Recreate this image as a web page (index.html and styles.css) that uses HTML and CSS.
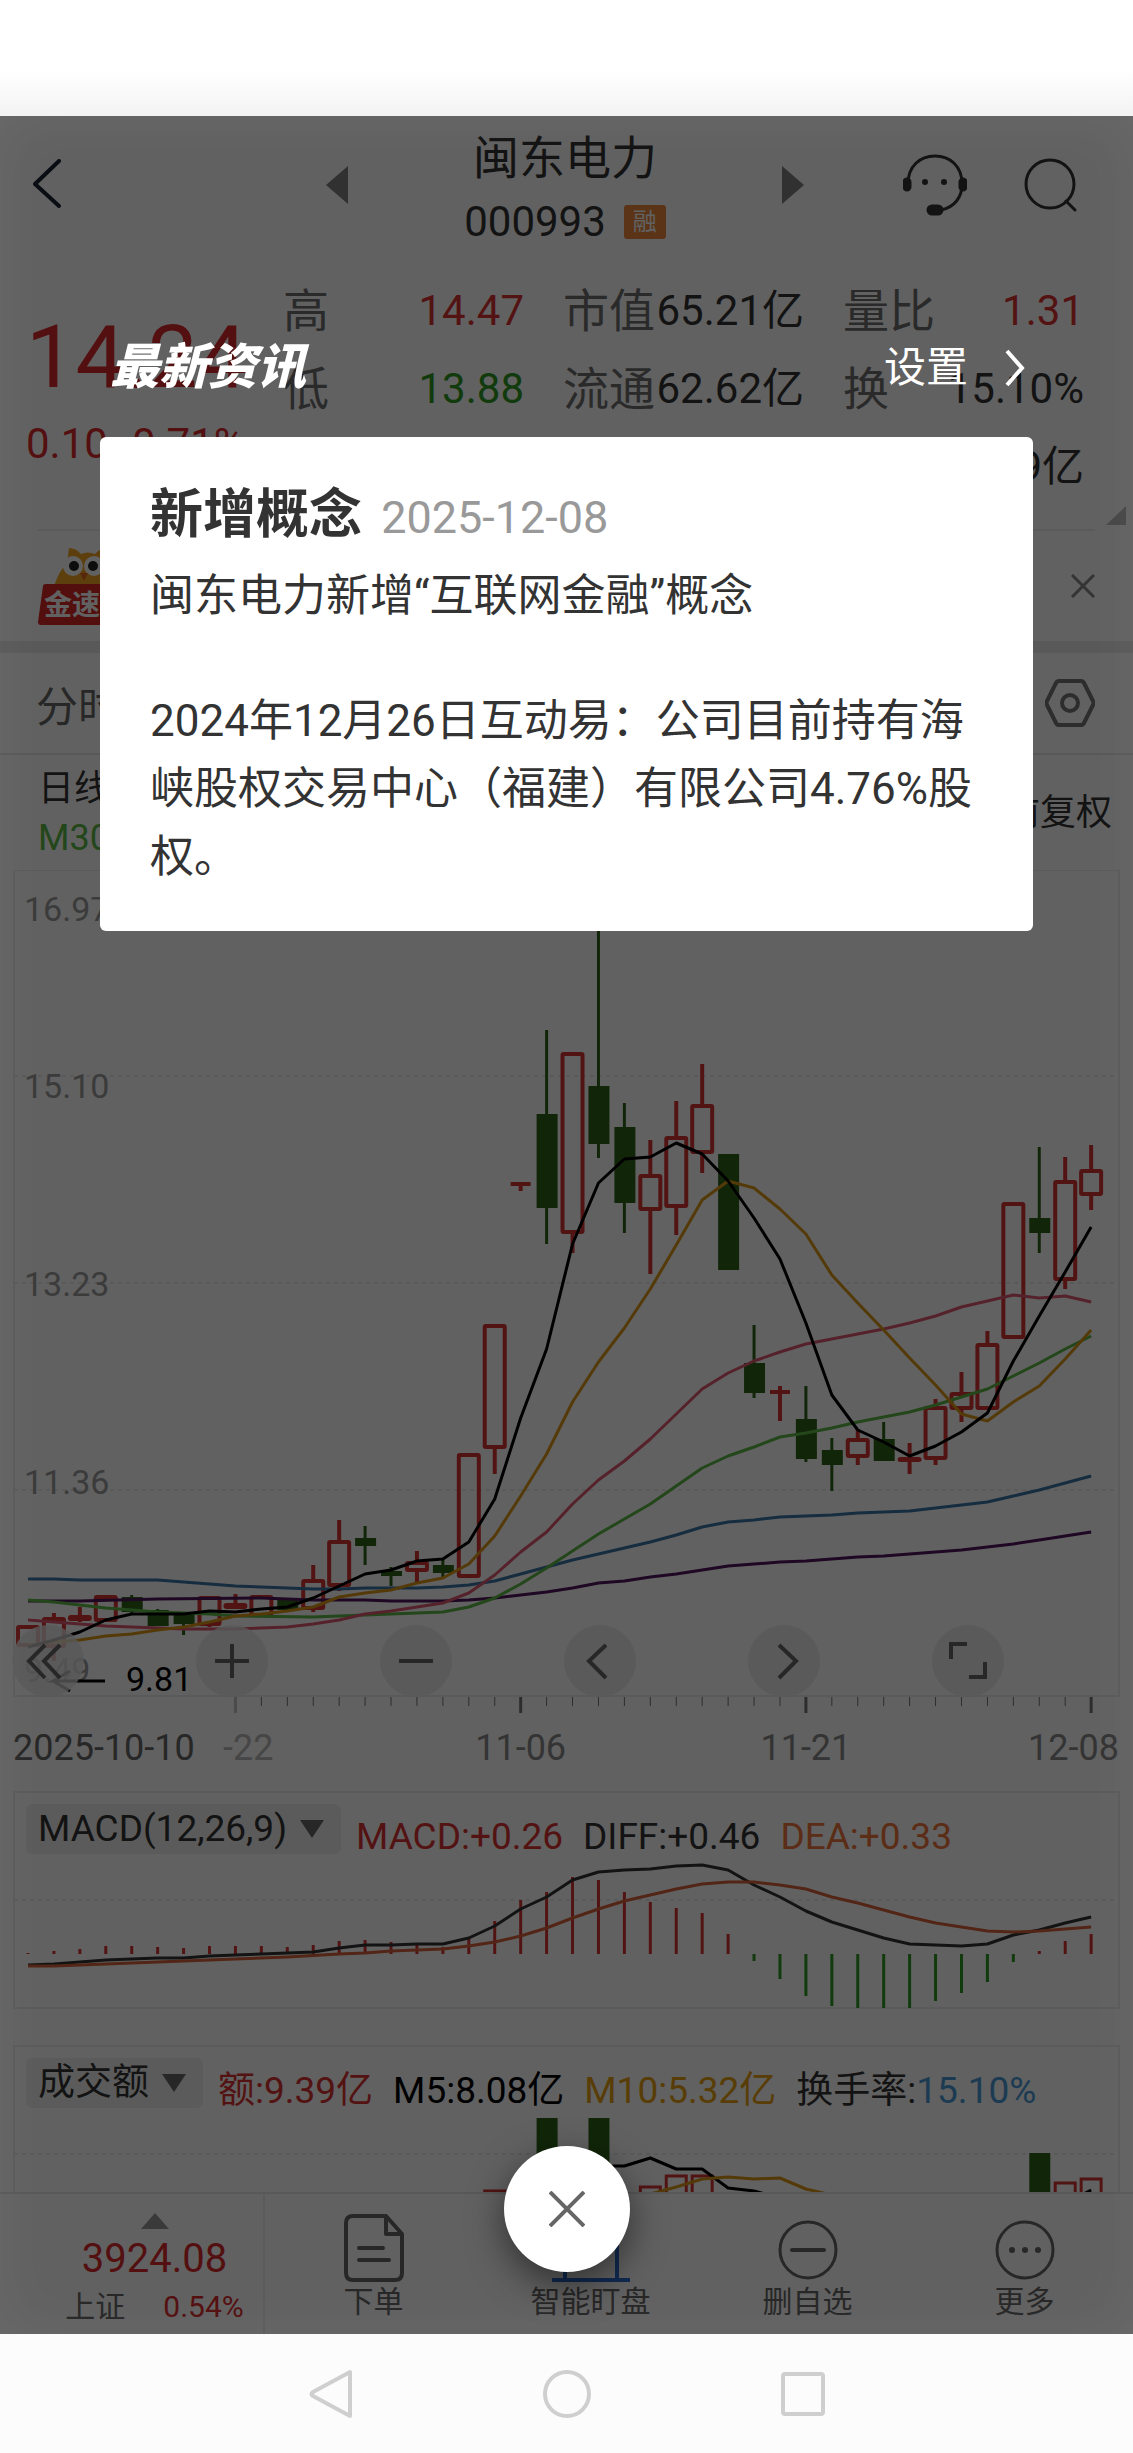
FILE: index.html
```html
<!DOCTYPE html>
<html lang="zh-CN">
<head>
    <meta charset="UTF-8">
    <meta name="viewport" content="width=device-width, initial-scale=1">
    <title>闽东电力 000993</title>
    <link rel="stylesheet" href="styles.css">
</head>

<body>
    <div class="status-bar"></div>

    <div class="app">
        <header class="header">
            <button class="icon-btn" aria-label="返回">
                <svg width="30" height="52" viewBox="0 0 30 52"><path d="M26 2 L2 25 L26 47" fill="none" stroke="#1c2433" stroke-width="4" stroke-linecap="round" stroke-linejoin="round"/></svg>
            </button>
            <div class="stock-nav">
                <button class="icon-btn" aria-label="上一只">
                    <svg width="22" height="38" viewBox="0 0 22 38"><path d="M22 0 V38 L0 19 Z" fill="#808080"/></svg>
                </button>
                <div class="stock-title">
                    <h1>闽东电力</h1>
                    <p>000993 <span class="tag">融</span></p>
                </div>
                <button class="icon-btn" aria-label="下一只">
                    <svg width="22" height="38" viewBox="0 0 22 38"><path d="M0 0 V38 L22 19 Z" fill="#808080"/></svg>
                </button>
            </div>
            <div class="header-tools">
                <button class="icon-btn" aria-label="客服">
                    <svg width="64" height="62" viewBox="0 0 64 62" fill="none" stroke="#333" stroke-width="3">
                        <path d="M5 30 C5 12 17 2 32 2 C47 2 59 12 59 30 C59 43 52 53 38 56"/>
                        <rect x="1" y="25" width="6" height="11" rx="3" fill="#333"/>
                        <rect x="57" y="25" width="6" height="11" rx="3" fill="#333"/>
                        <rect x="25" y="52" width="14" height="8" rx="4" fill="#333"/>
                        <circle cx="22" cy="28" r="3" fill="#333" stroke="none"/>
                        <circle cx="41" cy="28" r="3" fill="#333" stroke="none"/>
                    </svg>
                </button>
                <button class="icon-btn" aria-label="搜索">
                    <svg width="54" height="54" viewBox="0 0 54 54" fill="none" stroke="#333" stroke-width="3" stroke-linecap="round"><circle cx="27" cy="26" r="24"/><path d="M43 43 L52 52"/></svg>
                </button>
            </div>
        </header>

        <section class="quote">
            <div class="price">
                <strong>14.24</strong>
                <span>0.10</span><span>0.71%</span>
            </div>
            <dl>
                <div><dt>高</dt><dd class="red">14.47</dd></div>
                <div><dt>低</dt><dd class="green">13.88</dd></div>
            </dl>
            <dl>
                <div><dt>市值</dt><dd>65.21亿</dd></div>
                <div><dt>流通</dt><dd>62.62亿</dd></div>
            </dl>
            <dl>
                <div><dt>量比</dt><dd class="red">1.31</dd></div>
                <div><dt>换</dt><dd>15.10%</dd></div>
                <div><dt>额</dt><dd>9.39亿</dd></div>
            </dl>
        </section>
        <div class="more-corner">
            <svg width="20" height="19" viewBox="0 0 20 19"><path d="M20 0 V19 H0 Z" fill="#bbb"/></svg>
        </div>

        <section class="banner">
            <a class="banner-link" href="#">
                <svg width="104" height="80" viewBox="0 0 104 80">
                    <path d="M14 50 C16 36 22 24 29 17 L31 2 Q38 2 43 8 Q50 5 57 8 Q62 2 69 2 L71 17 C80 24 86 36 87 50 Z" fill="#f5a623"/>
                    <path d="M28 50 Q47 26 66 50 Z" fill="#fff"/>
                    <circle cx="35" cy="20" r="10" fill="#fff"/>
                    <circle cx="56" cy="20" r="10" fill="#fff"/>
                    <circle cx="36" cy="20" r="5" fill="#222"/>
                    <circle cx="55" cy="20" r="5" fill="#222"/>
                    <path d="M42 27 L50 27 L46 35 Z" fill="#e8641b"/>
                    <path d="M8 38 H104 V79 H3 Q0 79 0 76 L5 40 Q5 38 8 38 Z" fill="#d92626"/>
                    <text x="6" y="69" class="banner-text">金速</text>
                </svg>
            </a>
            <button class="icon-btn" aria-label="关闭广告">
                <svg width="24" height="24" viewBox="0 0 24 24"><path d="M1 1 L23 23 M23 1 L1 23" stroke="#888" stroke-width="3"/></svg>
            </button>
        </section>

        <nav class="tabs">
            <a href="#">分时</a>
            <button class="icon-btn" aria-label="图表设置">
                <svg width="50" height="48" viewBox="0 0 50 48" fill="none" stroke="#777" stroke-width="4" stroke-linejoin="round">
                    <path d="M14 2 H36 Q38 2 39 4 L48 22 Q49 24 48 26 L39 44 Q38 46 36 46 H14 Q12 46 11 44 L2 26 Q1 24 2 22 L11 4 Q12 2 14 2 Z"/>
                    <circle cx="25" cy="24" r="8"/>
                </svg>
            </button>
        </nav>

        <div class="k-info">
            <div>
                <p>日线</p>
                <p class="m30">M30</p>
            </div>
            <button class="adjust">前复权</button>
        </div>

        <section class="chart">
            <svg id="kline" viewBox="0 871 1133 921"></svg>
            <div class="chart-tools">
                <button aria-label="展开"><svg viewBox="0 0 72 72"><path d="M33 20 L17 36 L33 53 M48 20 L32 36 L48 53"/></svg></button>
                <button aria-label="放大"><svg viewBox="0 0 72 72"><path d="M19 36 H53 M36 19 V53"/></svg></button>
                <button aria-label="缩小"><svg viewBox="0 0 72 72"><path d="M19 36 H53"/></svg></button>
                <button aria-label="左移"><svg viewBox="0 0 72 72"><path d="M42 20 L25 36 L42 53"/></svg></button>
                <button aria-label="右移"><svg viewBox="0 0 72 72"><path d="M31 20 L48 36 L31 53"/></svg></button>
                <button aria-label="全屏"><svg viewBox="0 0 72 72"><path d="M19 34 V19 H35 M53 37 V52 H37"/></svg></button>
            </div>
        </section>

        <section class="chart">
            <svg id="macd" viewBox="0 1791 1133 218"></svg>
            <div class="chart-head">
                <button class="picker">MACD(12,26,9) <svg width="26" height="18" viewBox="0 0 26 18"><path d="M1 0 H25 L13 18 Z" fill="#666"/></svg></button>
                <p class="legend">
                    <span class="red">MACD:+0.26</span>
                    <span>DIFF:+0.46</span>
                    <span class="orange">DEA:+0.33</span>
                </p>
            </div>
        </section>

        <section class="chart volume">
            <svg id="volume" viewBox="0 2045 1133 147"></svg>
            <div class="chart-head">
                <button class="picker">成交额 <svg width="26" height="18" viewBox="0 0 26 18"><path d="M1 0 H25 L13 18 Z" fill="#666"/></svg></button>
                <p class="legend">
                    <span class="red">额:9.39亿</span>
                    <span class="black">M5:8.08亿</span>
                    <span class="yellow">M10:5.32亿</span>
                    <span>换手率:<b>15.10%</b></span>
                </p>
            </div>
        </section>

        <footer class="bottom-bar">
            <a class="index" href="#">
                <svg width="28" height="16" viewBox="0 0 28 16"><path d="M14 0 L28 16 H0 Z" fill="#999"/></svg>
                <strong>3924.08</strong>
                <span class="index-row"><span>上证</span><em>0.54%</em></span>
            </a>
            <a href="#">
                <svg width="60" height="68" viewBox="0 0 60 68" fill="none" stroke="#666" stroke-width="4" stroke-linejoin="round" stroke-linecap="round"><path d="M40 2 H9 Q2 2 2 9 V59 Q2 66 9 66 H51 Q58 66 58 59 V20 L42 2 V20 H57"/><path d="M15 34 H39 M15 46 H45"/></svg>
                下单
            </a>
            <a href="#">
                <svg width="78" height="68" viewBox="0 0 78 68" fill="none" stroke="#2f6fd6" stroke-width="4"><path d="M0 66 H78 M13 66 V36 H39 M65 66 V10 H39 V36"/></svg>
                智能盯盘
            </a>
            <a href="#">
                <svg width="60" height="68" viewBox="0 0 60 68" fill="none" stroke="#666" stroke-width="3"><circle cx="30" cy="36" r="28"/><path d="M14 36 H46" stroke-width="4" stroke-linecap="round"/></svg>
                删自选
            </a>
            <a href="#">
                <svg width="60" height="68" viewBox="0 0 60 68" fill="none" stroke="#666" stroke-width="3"><circle cx="30" cy="36" r="28"/><g fill="#666" stroke="none"><circle cx="17" cy="36" r="3"/><circle cx="30" cy="36" r="3"/><circle cx="43" cy="36" r="3"/></g></svg>
                更多
            </a>
        </footer>

        <div class="mask">
            <div class="news-head">
                <h2>最新资讯</h2>
                <a href="#">设置
                    <svg width="21" height="38" viewBox="0 0 21 38"><path d="M3 2 L18 19 L3 36" fill="none" stroke="#fff" stroke-width="4"/></svg>
                </a>
            </div>
            <article class="news" role="dialog" aria-label="最新资讯">
                <h3>新增概念 <time>2025-12-08</time></h3>
                <p>闽东电力新增“互联网金融”概念</p>
                <p>2024年12月26日互动易：公司目前持有海峡股权交易中心（福建）有限公司4.76%股权。</p>
            </article>
            <button class="close" aria-label="关闭">
                <svg width="36" height="36" viewBox="0 0 36 36"><path d="M1 1 L35 35 M35 1 L1 35" stroke="#666" stroke-width="4"/></svg>
            </button>
        </div>
    </div>

    <nav class="system-nav">
        <button aria-label="返回"><svg width="46" height="50" viewBox="0 0 46 50"><path d="M42 3 V47 L5 27 Q2 25 5 23 Z"/></svg></button>
        <button aria-label="主页"><svg width="50" height="50" viewBox="0 0 50 50"><circle cx="25" cy="25" r="22"/></svg></button>
        <button aria-label="多任务"><svg width="46" height="46" viewBox="0 0 46 46"><rect x="3" y="3" width="40" height="40" rx="2"/></svg></button>
    </nav>

    <script src="script.js"></script>
</body>
</html>
```

FILE: styles.css
```css
* {
    box-sizing: border-box;
    margin: 0;
    padding: 0;
}

body {
    font-family: Roboto, "Noto Sans CJK SC", sans-serif;
    color: #333;
    background: #fff;
}

button {
    font: inherit;
    color: inherit;
    background: none;
    border: none;
    cursor: pointer;
}

a {
    color: inherit;
    text-decoration: none;
}

svg {
    display: block;
}

.red { color: #dc3434; }
.green { color: #2f9a24; }
.orange { color: #f0743c; }
.yellow { color: #e8a010; }
.black { color: #000; }

.status-bar {
    height: 116px;
    background: linear-gradient(#fff 60%, #f3f3f3);
}

.app {
    position: relative;
    background: #fff;
}

/* header */
.header {
    display: grid;
    grid-template-columns: 1fr 478px 1fr;
    align-items: center;
    height: 132px;
    padding: 0 56px 0 33px;
}

.header > .icon-btn {
    justify-self: start;
}

.stock-nav {
    display: flex;
    align-items: center;
    justify-content: space-between;
    margin: 0 -10px 0 10px;
}

.stock-title {
    padding-top: 10px;
    text-align: center;
}

.stock-title h1 {
    font-size: 46px;
    font-weight: 400;
    line-height: 64px;
}

.stock-title p {
    display: flex;
    align-items: center;
    justify-content: center;
    gap: 18px;
    font-size: 42px;
    line-height: 64px;
}

.tag {
    padding: 0 9px;
    border-radius: 3px;
    background: #ee8a3e;
    color: #fff;
    font-size: 24px;
    line-height: 34px;
}

.header-tools {
    display: flex;
    align-items: center;
    justify-content: flex-end;
    gap: 56px;
}

/* quote */
.quote {
    display: grid;
    grid-template-columns: 218px repeat(3, 1fr);
    gap: 39px;
    padding: 24px 49px 0 26px;
}

.price {
    padding-top: 40px;
    color: #dc2c2c;
    font-size: 42px;
    line-height: 84px;
    white-space: nowrap;
}

.price strong {
    display: block;
    font-size: 88px;
    font-weight: 400;
    line-height: 90px;
}

.price span {
    margin-right: 24px;
}

.quote dl > div {
    display: flex;
    justify-content: space-between;
    height: 78px;
    line-height: 78px;
    white-space: nowrap;
}

.quote dt {
    color: #6e6e6e;
    font-size: 46px;
}

.quote dd {
    font-size: 42px;
}

.more-corner {
    display: flex;
    justify-content: flex-end;
    height: 23px;
    padding-right: 7px;
}

/* banner */
.banner {
    display: flex;
    align-items: center;
    justify-content: space-between;
    height: 112px;
    margin: 0 38px;
    border-top: 2px solid #eee;
}

.banner-text {
    fill: #fff;
    font-size: 28px;
    font-weight: 700;
}

/* tabs */
.tabs {
    display: flex;
    align-items: center;
    justify-content: space-between;
    height: 114px;
    padding: 0 38px 0 36px;
    border-top: 12px solid #eaeaea;
    border-bottom: 2px solid #e8e8e8;
    color: #666;
    font-size: 42px;
}

.k-info {
    display: flex;
    align-items: center;
    justify-content: space-between;
    height: 115px;
    padding: 2px 21px 0 38px;
    font-size: 36px;
    line-height: 49px;
}

.m30 {
    color: #5cb944;
}

/* charts: drawing and its controls share one grid cell */
.chart {
    display: grid;
}

.chart > * {
    grid-area: 1 / 1;
    min-width: 0;
}

.chart > svg {
    width: 100%;
}

.chart-tools {
    display: flex;
    align-self: end;
    gap: 112px;
    padding: 0 0 94px 12px;
}

.chart-tools button {
    width: 72px;
    height: 72px;
    border-radius: 50%;
    background: rgba(232, 232, 232, 0.8);
}

.chart-tools path {
    fill: none;
    stroke: #666;
    stroke-width: 4;
}

.chart-head {
    display: flex;
    align-items: flex-start;
    gap: 15px;
    padding: 13px 26px 0;
    font-size: 37px;
    white-space: nowrap;
}

.picker {
    display: flex;
    align-items: center;
    gap: 12px;
    padding: 0 16px 0 12px;
    border-radius: 6px;
    background: #f0f0f0;
    line-height: 50px;
}

.legend {
    display: flex;
    gap: 20px;
    line-height: 66px;
}

.legend b {
    color: #4a9cd8;
    font-weight: 400;
}

.volume {
    margin-top: 36px;
}

.grid {
    stroke: #eaeaea;
    stroke-width: 2;
}

.frame {
    fill: none;
    stroke: #ececec;
    stroke-width: 2;
}

.axis {
    fill: #9c9c9c;
    font-size: 34px;
}

.date {
    fill: #8a8a8a;
    font-size: 36px;
}

.date-start {
    fill: #666;
}

.low-mark {
    fill: #000;
    font-size: 34px;
}

/* bottom bar */
.bottom-bar {
    display: flex;
    height: 142px;
    border-top: 2px solid #e6e6e6;
    color: #666;
    font-size: 30px;
    line-height: 36px;
}

.bottom-bar > a {
    flex: 1;
    display: flex;
    flex-direction: column;
    align-items: center;
    gap: 2px;
    padding-top: 20px;
}

.bottom-bar > .index {
    flex: none;
    width: 265px;
    gap: 6px;
    padding: 19px 16px 0 62px;
    border-right: 2px solid #eee;
}

.index strong {
    color: #dc2c2c;
    font-size: 40px;
    font-weight: 400;
    line-height: 48px;
}

.index-row {
    display: flex;
    gap: 38px;
}

.index em {
    color: #dc2c2c;
    font-style: normal;
}

/* news popup */
.mask {
    position: absolute;
    inset: 0;
    display: flex;
    flex-direction: column;
    padding: 222px 100px 62px;
    background: rgba(0, 0, 0, 0.62);
    box-shadow: inset 0 0 60px rgba(255, 255, 255, 0.06);
}

.news-head {
    display: flex;
    align-items: center;
    justify-content: space-between;
    margin-bottom: 39px;
    padding: 0 8px 0 10px;
    color: #fff;
    line-height: 60px;
}

.news-head h2 {
    font-size: 49px;
    font-weight: 900;
    font-style: italic;
}

.news-head a {
    display: flex;
    align-items: center;
    gap: 36px;
    font-size: 42px;
}

.news {
    padding: 44px 50px 40px;
    border-radius: 6px;
    background: #fff;
    font-size: 44px;
    line-height: 68px;
}

.news h3 {
    margin-bottom: 10px;
    font-size: 53px;
}

.news time {
    margin-left: 6px;
    color: #999;
    font-size: 45px;
    font-weight: 400;
}

.news p + p {
    margin-top: 57px;
}

.close {
    display: flex;
    align-items: center;
    justify-content: center;
    align-self: center;
    width: 126px;
    height: 126px;
    margin-top: auto;
    border-radius: 50%;
    background: #fff;
    box-shadow: 0 12px 36px rgba(0, 0, 0, 0.5);
}

/* system nav */
.system-nav {
    display: flex;
    align-items: center;
    justify-content: center;
    gap: 188px;
    height: 119px;
    background: #fcfcfc;
}

.system-nav svg {
    fill: none;
    stroke: #cfcfcf;
    stroke-width: 4;
    stroke-linejoin: round;
}
```

FILE: script.js
```js
const RED = '#d83434';
const GREEN = '#2f641a';
const LEFT = 14;
const RIGHT = 1119;

// x of the n-th trading day
const dayX = n => 28 + n * 25.93;

function line(x1, y1, x2, y2, attrs) {
    return `<line x1="${x1}" y1="${y1}" x2="${x2}" y2="${y2}" ${attrs}/>`;
}

function grid(y) {
    return line(LEFT, y, RIGHT, y, 'class="grid" stroke-dasharray="4 4"');
}

function frame(y, height) {
    return `<rect class="frame" x="${LEFT}" y="${y}" width="${RIGHT - LEFT}" height="${height}"/>`;
}

// points: y per day, null = take the straight line between neighbours
function curve(points, color, width = 3) {
    const list = points
        .map((y, i) => (y === null ? null : `${dayX(i)},${y}`))
        .filter(p => p !== null);
    return `<polyline points="${list.join(' ')}" fill="none" stroke="${color}" stroke-width="${width}" stroke-linejoin="round"/>`;
}

// [up, body top, body bottom, wick top, wick bottom]
const candles = [
    [1, 1628, 1646, 1628, 1648], [1, 1620, 1647, 1614, 1662], [1, 1618, 1620, 1608, 1623],
    [1, 1598, 1621, 1598, 1621], [0, 1598, 1613, 1596, 1615], [0, 1611, 1627, 1610, 1627],
    [0, 1615, 1625, 1615, 1636], [1, 1599, 1625, 1599, 1628], [1, 1606, 1608, 1595, 1610],
    [1, 1598, 1616, 1596, 1616], [0, 1599, 1611, 1599, 1612], [1, 1582, 1609, 1566, 1613],
    [1, 1543, 1586, 1521, 1592], [0, 1539, 1547, 1527, 1566], [0, 1572, 1577, 1568, 1587],
    [1, 1564, 1571, 1552, 1584], [0, 1566, 1574, 1560, 1578], [1, 1456, 1577, 1456, 1578],
    [1, 1327, 1448, 1327, 1475], [1, 1185, 1185, 1185, 1192], [0, 1115, 1209, 1031, 1245],
    [1, 1055, 1233, 1055, 1254], [0, 1087, 1145, 880, 1159], [0, 1128, 1204, 1104, 1234],
    [1, 1177, 1210, 1141, 1275], [1, 1139, 1207, 1102, 1236], [1, 1107, 1153, 1065, 1174],
    [0, 1155, 1271, 1155, 1271], [0, 1364, 1394, 1326, 1399], [1, 1393, 1393, 1387, 1422],
    [0, 1420, 1460, 1387, 1463], [0, 1451, 1466, 1439, 1492], [1, 1441, 1457, 1430, 1466],
    [0, 1440, 1462, 1423, 1462], [1, 1460, 1461, 1444, 1475], [1, 1409, 1459, 1400, 1466],
    [1, 1395, 1409, 1373, 1423], [1, 1346, 1409, 1332, 1409], [1, 1205, 1338, 1205, 1340],
    [0, 1219, 1234, 1148, 1254], [1, 1183, 1280, 1158, 1290], [1, 1172, 1195, 1146, 1211]
];

const ma5 = [1648, 1641, 1633, 1621, 1615, 1615, 1615, 1612, 1613, 1610, 1608, 1599, 1587, 1575, 1571, 1562, 1560, 1543, 1500, 1419, 1350, 1245, 1184, 1160, 1158, 1144, 1155, 1182, 1219, 1260, 1324, 1396, 1431, 1443, 1457, 1447, 1433, 1414, 1362, 1317, 1273, 1228];
const ma10 = [1646, 1643, 1641, 1637, 1635, 1631, 1628, 1623, 1617, 1615, 1612, 1608, 1598, 1594, 1591, 1584, 1579, 1565, 1537, 1497, 1455, 1403, 1363, 1329, 1290, 1246, 1201, 1182, 1189, 1210, 1235, 1276, 1304, 1331, 1359, 1386, 1415, 1422, 1403, 1387, 1360, 1331];
const ma20 = [1621, 1623, 1625, 1627, null, null, 1630, null, 1630, null, 1628, 1625, 1621, 1615, 1612, 1608, 1604, 1594, 1576, 1553, 1533, 1505, 1481, 1462, 1440, 1415, 1390, 1374, 1362, 1353, 1345, 1340, 1335, 1330, 1324, 1317, 1308, 1302, 1296, 1299, 1297, 1303];
const ma30 = [1601, 1603, 1606, 1609, 1611, 1613, 1614, 1615, 1617, null, null, 1618, 1617, 1616, null, 1614, 1613, 1608, 1599, 1585, 1569, 1552, 1535, 1520, 1505, 1487, 1469, 1457, 1448, 1438, 1434, 1429, 1423, 1418, 1413, 1406, 1398, 1390, 1377, 1364, 1350, 1337];
const ma60 = [1580, 1580, 1581, null, null, 1581, 1583, 1585, 1587, 1588, 1589, 1590, 1590, 1589, null, 1589, 1588, 1586, 1582, 1575, 1568, 1561, 1555, 1549, 1543, 1536, 1528, 1523, 1521, 1518, null, 1516, 1514, null, 1512, 1509, null, 1503, 1497, 1491, 1484, 1477];
const ma120 = [1602, null, 1602, null, null, 1600, null, null, null, 1599, null, 1601, null, 1601, 1602, null, 1602, 1601, 1599, 1596, 1593, 1589, 1584, 1582, 1578, 1575, 1571, 1567, 1565, 1563, 1562, 1560, 1558, 1557, 1555, 1553, 1551, 1548, 1545, 1541, 1537, 1533];

function drawKline() {
    let out = frame(871, 826) + grid(1077) + grid(1284) + grid(1491);

    candles.forEach(([up, top, bottom, high, low], i) => {
        const x = dayX(i);
        const color = up ? RED : GREEN;
        const wick = `stroke="${color}" stroke-width="${up ? 4 : 3}"`;
        if (high < top) out += line(x, high, x, top, wick);
        if (low > bottom) out += line(x, bottom, x, low, wick);
        if (top === bottom) {
            out += line(x - 10, top, x + 10, top, `stroke="${color}" stroke-width="4"`);
        } else if (up) {
            out += `<rect x="${x - 10}" y="${top}" width="20" height="${bottom - top}" rx="1" fill="none" stroke="${color}" stroke-width="4"/>`;
        } else {
            out += `<rect x="${x - 10}" y="${top}" width="21" height="${bottom - top}" fill="${color}"/>`;
        }
    });

    out += curve(ma120, '#4f155c');
    out += curve(ma60, '#3a74a6');
    out += curve(ma30, '#5cb944');
    out += curve(ma20, '#e05a74');
    out += curve(ma10, '#dd9916');
    out += curve(ma5, '#000');

    [['16.97', 922], ['15.10', 1099], ['13.23', 1297], ['11.36', 1495], ['9.49', 1683]].forEach(([text, y]) => {
        out += `<text class="axis" x="24" y="${y}">${text}</text>`;
    });

    // lowest price marker
    out += '<path d="M105 1682 H53 L70 1672 M53 1682 L70 1692" fill="none" stroke="#000" stroke-width="3"/>';
    out += '<text class="low-mark" x="126" y="1692">9.81</text>';

    for (let i = 8; i < candles.length; i++) {
        const major = [8, 19, 30, 41].includes(i);
        const color = i === 8 ? '#c4c4c4' : '#777';
        out += line(dayX(i), 1698, dayX(i), major ? 1714 : 1707, `stroke="${color}" stroke-width="${major ? 3 : 1}"`);
    }
    out += '<text class="date date-start" x="13" y="1761">2025-10-10</text>';
    out += '<text class="date" x="223" y="1761" opacity="0.6">-22</text>';
    out += `<text class="date" x="${dayX(19)}" y="1761" text-anchor="middle">11-06</text>`;
    out += `<text class="date" x="${dayX(30)}" y="1761" text-anchor="middle">11-21</text>`;
    out += '<text class="date" x="1119" y="1761" text-anchor="end">12-08</text>';

    document.getElementById('kline').innerHTML = out;
}

const bars = [1953, 1951, 1949, 1946, 1946, 1947, 1948, 1946, 1946, 1946, 1947, 1945, 1941, 1940, 1942, 1945, 1947, 1938, 1921, 1900, 1892, 1877, 1880, 1892, 1902, 1908, 1913, 1934, 1961, 1979, 1996, 2006, 2008, 2008, 2008, 2001, 1993, 1982, 1962, 1951, 1941, 1934];
const diff = [1965, 1964, 1962, 1960, 1959, 1958, 1958, 1956, 1955, 1954, 1953, 1952, 1948, 1945, 1945, 1944, 1944, 1938, 1926, 1909, 1897, 1880, 1872, 1870, 1869, 1866, 1865, 1870, 1885, 1897, 1911, 1922, 1930, 1938, 1944, 1945, 1946, 1944, 1935, 1930, 1923, 1917];
const dea = [1966, 1966, 1965, 1964, 1963, null, 1961, null, 1959, null, 1957, null, 1954, 1953, 1951, 1950, 1949, 1946, 1942, 1936, 1928, 1918, 1909, 1901, 1895, 1889, 1884, 1882, 1882, 1885, 1889, 1897, 1903, 1910, 1917, 1923, 1927, 1931, 1932, 1931, 1929, 1927];

function drawMacd() {
    let out = frame(1792, 216) + grid(1900);
    bars.forEach((y, i) => {
        out += line(dayX(i), 1954, dayX(i), y, `stroke="${y < 1954 ? RED : '#2f9a24'}" stroke-width="3"`);
    });
    out += curve(diff, '#333') + curve(dea, '#d8623a');
    document.getElementById('macd').innerHTML = out;
}

function drawVolume() {
    let out = frame(2046, 300) + grid(2154);
    [[18, 2191], [24, 2187], [25, 2176], [26, 2176], [40, 2183], [41, 2179]].forEach(([i, y]) => {
        out += `<rect x="${dayX(i) - 10}" y="${y}" width="20" height="60" fill="none" stroke="${RED}" stroke-width="3"/>`;
    });
    [[20, 2118], [22, 2118], [39, 2153]].forEach(([i, y]) => {
        out += `<rect x="${dayX(i) - 10}" y="${y}" width="21" height="80" fill="${GREEN}"/>`;
    });
    const gap = n => Array(n).fill(null);
    out += curve([...gap(22), 2166, 2166, 2158, 2169, 2169, 2188, 2191, 2198], '#000');
    out += curve([...gap(23), 2204, 2194, 2187, 2179, 2177, 2179, 2178, 2189, 2195], '#dd9916');
    out += curve([...gap(40), 2204, 2190], '#000');
    document.getElementById('volume').innerHTML = out;
}

drawKline();
drawMacd();
drawVolume();
```
